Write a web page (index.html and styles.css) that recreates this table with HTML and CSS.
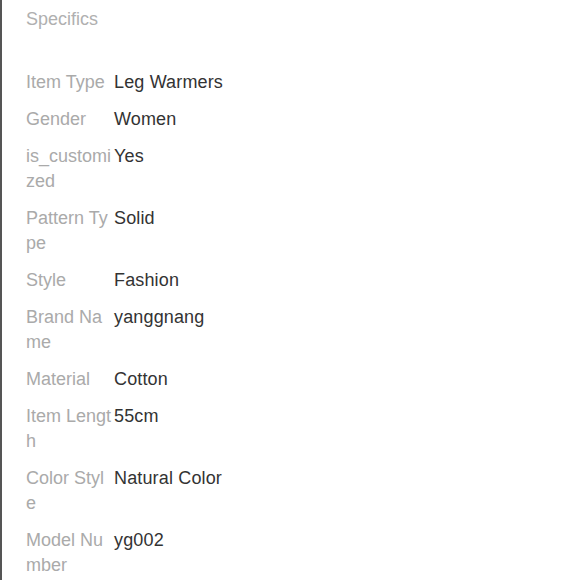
FILE: index.html
```html
<!DOCTYPE html>
<html>
<head>
<meta charset="utf-8">
<link rel="stylesheet" href="styles.css">
</head>
<body>
<div class="page">
  <div class="title">Specifics</div>
  <div class="specs">
    <div class="row"><div class="label">Item Type</div><div class="value">Leg Warmers</div></div>
    <div class="row"><div class="label">Gender</div><div class="value">Women</div></div>
    <div class="row"><div class="label">is_customized</div><div class="value">Yes</div></div>
    <div class="row"><div class="label">Pattern Type</div><div class="value">Solid</div></div>
    <div class="row"><div class="label">Style</div><div class="value">Fashion</div></div>
    <div class="row"><div class="label">Brand Name</div><div class="value">yanggnang</div></div>
    <div class="row"><div class="label">Material</div><div class="value">Cotton</div></div>
    <div class="row"><div class="label">Item Length</div><div class="value">55cm</div></div>
    <div class="row"><div class="label">Color Style</div><div class="value">Natural Color</div></div>
    <div class="row"><div class="label">Model Number</div><div class="value">yg002</div></div>
  </div>
</div>
</body>
</html>
```
FILE: styles.css
```css
html, body {
  margin: 0;
  padding: 0;
  background: #fff;
}
.page {
  min-height: 100vh;
  box-sizing: border-box;
  border-left: 2px solid #555;
  padding: 7px 0 0 24px;
  font-family: "Liberation Sans", Arial, sans-serif;
  font-size: 18px;
  line-height: 25px;
}
.title {
  color: #b0b0b0;
  margin-bottom: 38px;
}
.specs {
  display: flex;
  flex-direction: column;
  gap: 12px;
}
.row {
  display: flex;
}
.label {
  width: 87px;
  flex: none;
  color: #aaa;
  word-break: break-all;
}
.value {
  color: #333;
  padding-left: 1px;
  letter-spacing: 0.15px;
}
```
